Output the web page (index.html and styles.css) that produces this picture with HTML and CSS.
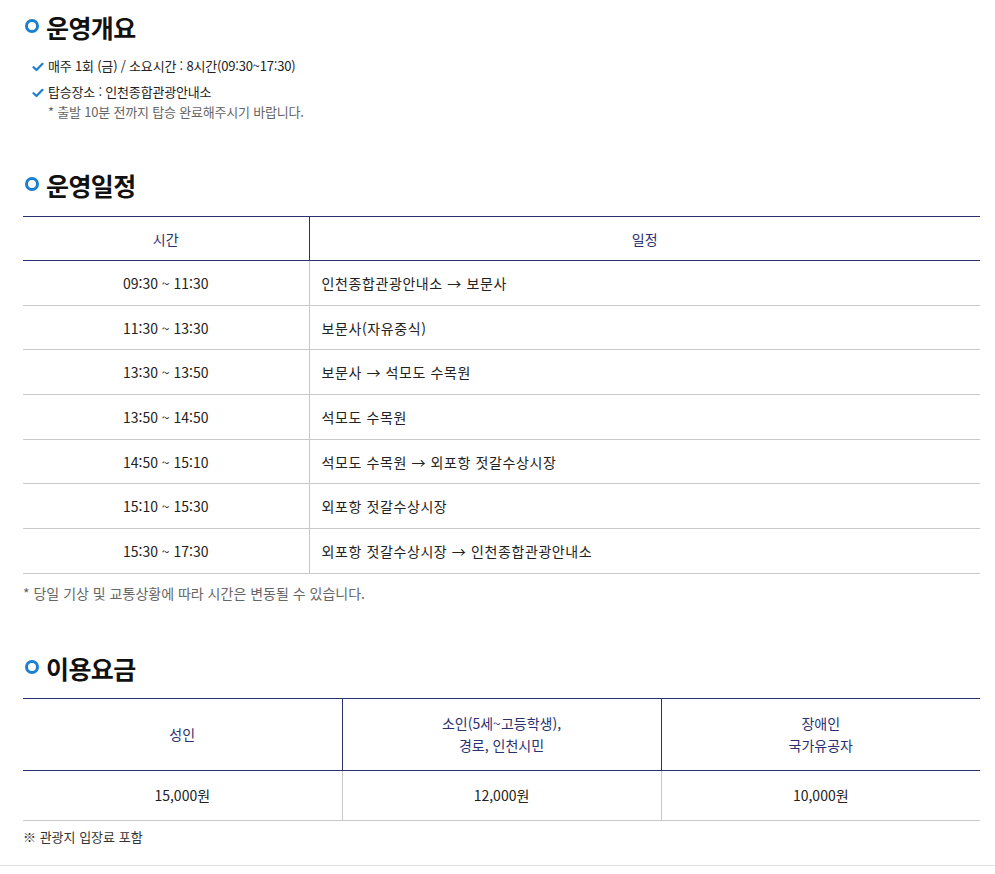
FILE: index.html
```html
<!DOCTYPE html>
<html lang="ko">
<head>
<meta charset="utf-8">
<link rel="stylesheet" href="styles.css">
</head>
<body>
<div class="page">
  <div class="wrap">
    <section class="sec sec-first">
      <h2 class="tit"><span class="ring"></span>운영개요</h2>
      <ul class="checks">
        <li><svg class="chk" viewBox="0 0 12 10" width="12" height="10"><path d="M1.5 5.2 L4.5 8 L10.5 1.8" fill="none" stroke="#1a7fd0" stroke-width="2.2" stroke-linecap="round" stroke-linejoin="round"/></svg>매주 1회 (금) / 소요시간 : 8시간(09:30~17:30)</li>
        <li><svg class="chk" viewBox="0 0 12 10" width="12" height="10"><path d="M1.5 5.2 L4.5 8 L10.5 1.8" fill="none" stroke="#1a7fd0" stroke-width="2.2" stroke-linecap="round" stroke-linejoin="round"/></svg>탑승장소 : 인천종합관광안내소<span class="sub">* 출발 10분 전까지 탑승 완료해주시기 바랍니다.</span></li>
      </ul>
    </section>

    <section class="sec sec-2">
      <h2 class="tit"><span class="ring"></span>운영일정</h2>
      <table class="tbl sched">
        <colgroup><col class="c1"><col></colgroup>
        <thead><tr><th>시간</th><th>일정</th></tr></thead>
        <tbody>
          <tr><td class="ctr">09:30 ~ 11:30</td><td class="ko">인천종합관광안내소 → 보문사</td></tr>
          <tr><td class="ctr">11:30 ~ 13:30</td><td class="ko">보문사(자유중식)</td></tr>
          <tr><td class="ctr">13:30 ~ 13:50</td><td class="ko">보문사 → 석모도 수목원</td></tr>
          <tr><td class="ctr">13:50 ~ 14:50</td><td class="ko">석모도 수목원</td></tr>
          <tr><td class="ctr">14:50 ~ 15:10</td><td class="ko">석모도 수목원 → 외포항 젓갈수상시장</td></tr>
          <tr><td class="ctr">15:10 ~ 15:30</td><td class="ko">외포항 젓갈수상시장</td></tr>
          <tr><td class="ctr">15:30 ~ 17:30</td><td class="ko">외포항 젓갈수상시장 → 인천종합관광안내소</td></tr>
        </tbody>
      </table>
      <p class="note">* 당일 기상 및 교통상황에 따라 시간은 변동될 수 있습니다.</p>
    </section>

    <section class="sec">
      <h2 class="tit"><span class="ring"></span>이용요금</h2>
      <table class="tbl fee">
        <thead><tr><th>성인</th><th>소인(5세~고등학생),<br>경로, 인천시민</th><th>장애인<br>국가유공자</th></tr></thead>
        <tbody>
          <tr><td class="ctr">15,000원</td><td class="ctr">12,000원</td><td class="ctr">10,000원</td></tr>
        </tbody>
      </table>
      <p class="note2">※ 관광지 입장료 포함</p>
    </section>
  </div>
  <div class="bottom-line"></div>
</div>
</body>
</html>
```

FILE: styles.css
```css
* { box-sizing: border-box; }
html, body { margin: 0; padding: 0; background: #fff; }
body {
  font-family: "Noto Sans CJK KR", "Noto Sans", sans-serif;
  color: #222;
  font-size: 14px;
}
.wrap { padding: 0 15px 0 23px; }
.sec { margin-top: 50px; }
.sec-first { margin-top: 12px; }
.sec-2 { margin-top: 48px; }
.tit {
  display: flex;
  align-items: center;
  gap: 7px;
  margin: 0;
  font-size: 25px;
  font-weight: 700;
  line-height: 30px;
  color: #111;
  letter-spacing: -0.6px;
}
.ring {
  width: 14px;
  height: 14px;
  border: 3px solid #1a7fd0;
  border-radius: 50%;
  flex: none;
  margin-left: 2px;
  margin-bottom: 2px;
}
.checks {
  list-style: none;
  margin: 14px 0 0;
  padding: 0 0 0 9px;
  font-size: 13px;
  line-height: 20px;
  color: #222;
  letter-spacing: -0.2px;
}
.checks li { position: relative; padding-left: 16px; margin-bottom: 6px; }
.chk { position: absolute; left: 0; top: 6px; }
.sub { display: block; color: #666; }
.tbl {
  width: 100%;
  border-collapse: collapse;
  margin-top: 16px;
  border-top: 1px solid #2a3170;
  font-size: 14px;
  letter-spacing: 0;
}
.tbl th {
  font-weight: 400;
  color: #2a3170;
  border-bottom: 1px solid #2a3170;
  text-align: center;
  padding: 0;
}
.tbl th + th { border-left: 1px solid #2a3170; }
.tbl td {
  border-bottom: 1px solid #c8c8c8;
  padding: 0 12px;
  color: #222;
}
.tbl td + td { border-left: 1px solid #c8c8c8; }
.tbl .ctr { text-align: center; }
.tbl .ko { letter-spacing: 0.6px; }
.sched .c1 { width: 286px; }
.sched th { height: 44px; }
.sched td { height: 44.7px; }
.fee { table-layout: fixed; margin-top: 15px; }
.fee th { height: 72px; line-height: 22px; }
.fee td { height: 50px; }
.note {
  margin: 9px 0 0;
  font-size: 14px;
  color: #666;
  letter-spacing: 0;
  line-height: 20px;
}
.note2 {
  margin: 6px 0 0;
  font-size: 13px;
  color: #333;
  line-height: 20px;
}
.bottom-line { margin-top: 18px; border-top: 1px solid #e0e0e0; }
```
